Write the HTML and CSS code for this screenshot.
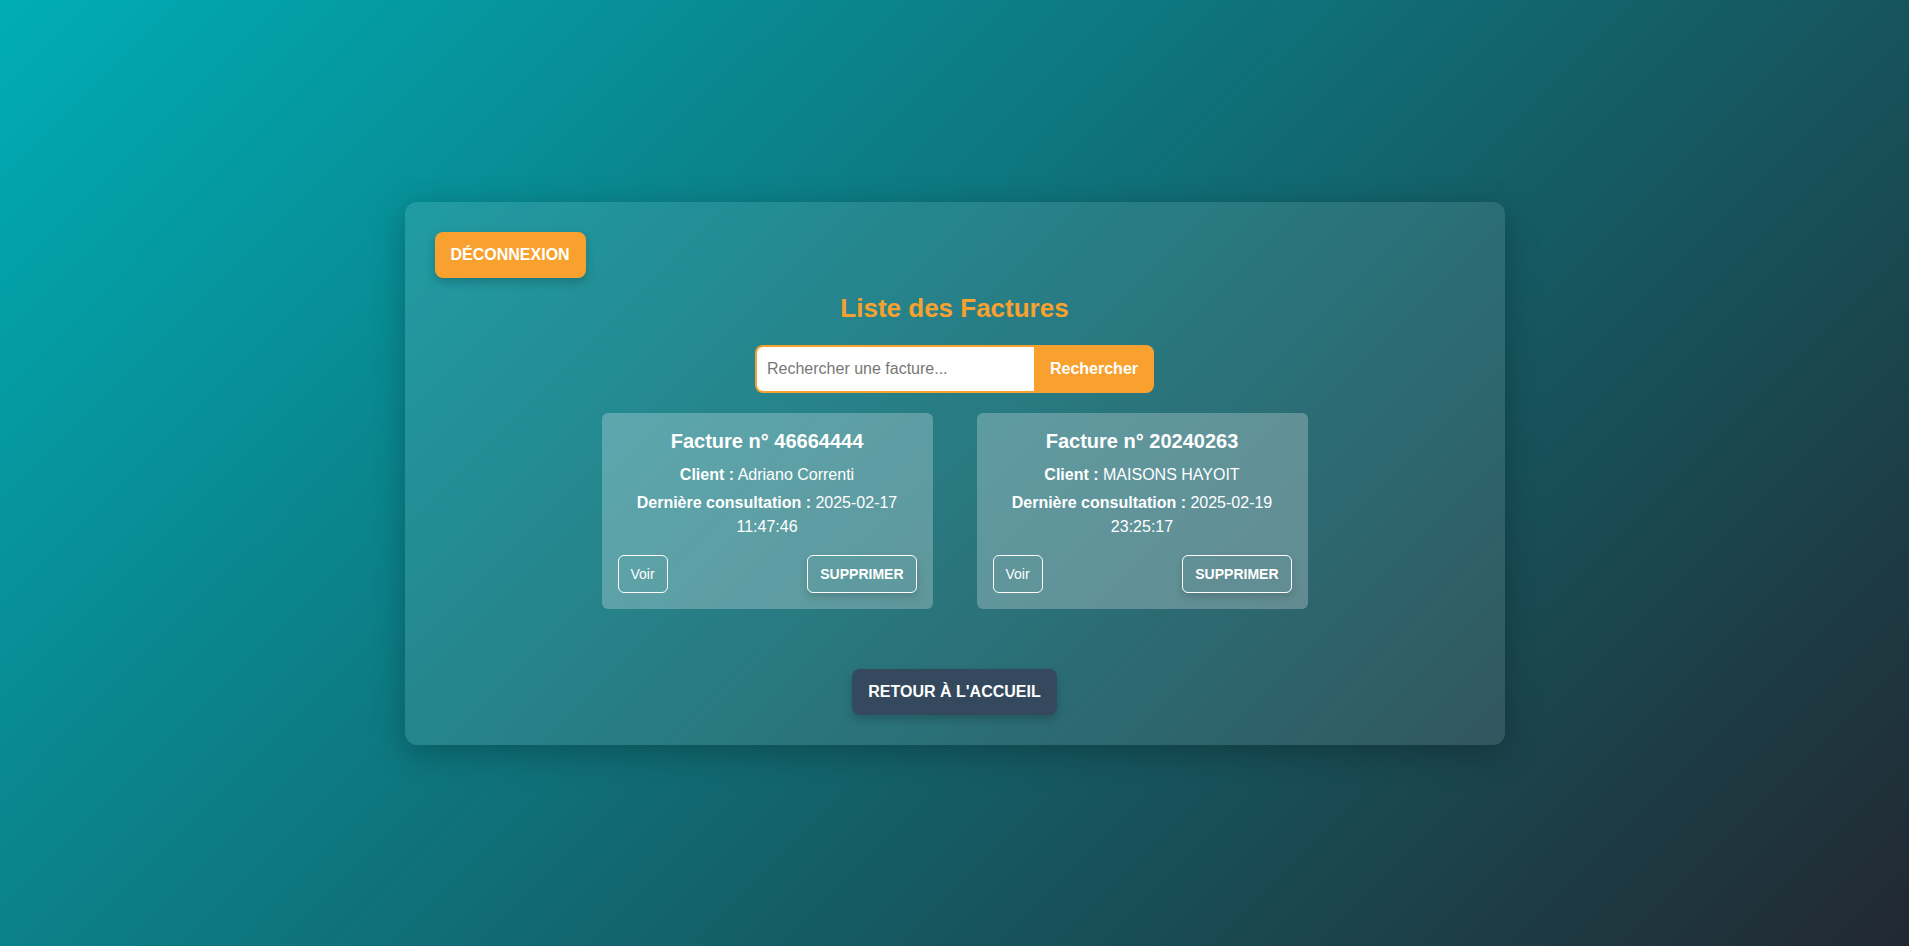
FILE: index.html
```html
<!DOCTYPE html>
<html lang="fr">

<head>
    <meta charset="UTF-8">
    <meta name="viewport" content="width=device-width, initial-scale=1.0">
    <title>Liste des Factures</title>
    <link rel="stylesheet" href="styles.css">
</head>

<body>
    <div class="container">
        <div class="top-bar">
            <button class="btn-orange">Déconnexion</button>
        </div>

        <h2>Liste des Factures</h2>

        <div class="search">
            <input type="text" placeholder="Rechercher une facture...">
            <button>Rechercher</button>
        </div>

        <div class="factures">
            <div class="facture">
                <h3>Facture n° 46664444</h3>
                <p><strong>Client :</strong> Adriano Correnti</p>
                <p><strong>Dernière consultation :</strong> 2025-02-17 11:47:46</p>
                <div class="actions">
                    <button class="btn-voir">Voir</button>
                    <button class="btn-supprimer">Supprimer</button>
                </div>
            </div>
            <div class="facture">
                <h3>Facture n° 20240263</h3>
                <p><strong>Client :</strong> MAISONS HAYOIT</p>
                <p><strong>Dernière consultation :</strong> 2025-02-19 23:25:17</p>
                <div class="actions">
                    <button class="btn-voir">Voir</button>
                    <button class="btn-supprimer">Supprimer</button>
                </div>
            </div>
        </div>

        <div class="bottom-bar">
            <button class="btn-retour">Retour à l'accueil</button>
        </div>
    </div>
</body>

</html>
```

FILE: styles.css
```css
body {
    font-family: "Liberation Sans", Arial, sans-serif;
    display: flex;
    align-items: center;
    justify-content: center;
    height: 100vh;
    margin: 0;
    background: linear-gradient(135deg, #00adb5 0%, #222831 100%);
    color: white;
}

.container {
    box-sizing: border-box;
    width: 1100px;
    padding: 30px;
    background: rgba(255, 255, 255, 0.1);
    border-radius: 12px;
    box-shadow: 0 8px 32px rgba(0, 0, 0, 0.25);
}

button {
    font-family: inherit;
    cursor: pointer;
}

.btn-orange,
.btn-retour {
    box-sizing: border-box;
    height: 46px;
    padding: 0 16px;
    border: none;
    border-radius: 8px;
    color: white;
    font-size: 16px;
    line-height: 46px;
    font-weight: bold;
    text-transform: uppercase;
    box-shadow: 0 4px 10px rgba(0, 0, 0, 0.2);
}

.btn-orange {
    background-color: #f9a12e;
}

.btn-retour {
    background-color: #34495e;
}

h2 {
    text-align: center;
    color: #f9a12e;
    font-size: 26px;
    line-height: 30px;
    margin: 15px 0 22px;
}

.search {
    display: flex;
    justify-content: center;
}

.search input {
    box-sizing: border-box;
    width: 279px;
    height: 48px;
    padding: 0 10px;
    border: 2px solid #f9a12e;
    border-right: none;
    border-radius: 8px 0 0 8px;
    font-family: inherit;
    font-size: 16px;
    outline: none;
}

.search input::placeholder {
    color: #777;
}

.search button {
    width: 120px;
    height: 48px;
    border: none;
    border-radius: 0 8px 8px 0;
    background-color: #f9a12e;
    color: white;
    font-size: 16px;
    font-weight: bold;
}

.factures {
    display: flex;
    justify-content: center;
    align-items: flex-start;
    gap: 44px;
    margin-top: 20px;
}

.facture {
    box-sizing: border-box;
    width: 331px;
    padding: 16px;
    background: rgba(255, 255, 255, 0.25);
    border-radius: 6px;
    text-align: center;
}

.facture h3 {
    font-size: 20px;
    line-height: 24px;
    margin: 0 0 10px;
}

.facture p {
    font-size: 16px;
    line-height: 24px;
    margin: 0 0 4px;
}

.actions {
    display: flex;
    justify-content: space-between;
    padding-top: 12px;
}

.btn-voir,
.btn-supprimer {
    box-sizing: border-box;
    height: 38px;
    padding: 0 12px;
    background: transparent;
    border: 1px solid white;
    border-radius: 6px;
    color: white;
    font-size: 14px;
    line-height: 36px;
}

.btn-supprimer {
    font-weight: bold;
    text-transform: uppercase;
    box-shadow: 0 4px 8px rgba(0, 0, 0, 0.15);
}

.bottom-bar {
    display: flex;
    justify-content: center;
    margin-top: 60px;
}
```
